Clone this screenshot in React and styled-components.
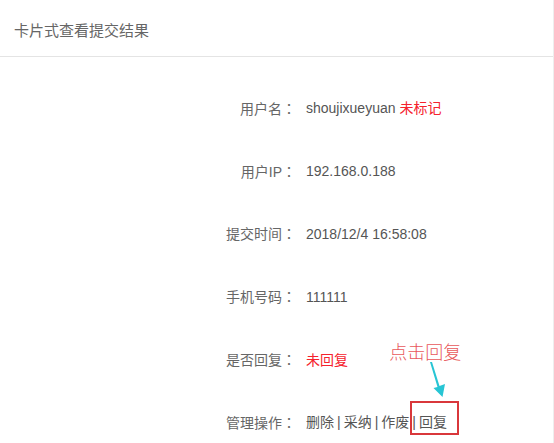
import React from "react"
import styled, { createGlobalStyle } from "styled-components"

const GlobalStyle = createGlobalStyle`
  html, body {
    margin: 0;
    padding: 0;
    background: #fff;
  }
  body {
    font-family: "Liberation Sans", "Noto Sans CJK SC", sans-serif;
  }
`

const Card = styled.section`
  width: 553px;
  height: 443px;
  border-right: 1px solid #eeeeee;
  background: #fff;
  overflow: hidden;
`

const CardHeader = styled.header`
  height: 57px;
  display: flex;
  align-items: center;
  padding: 3px 14px 0;
  border-bottom: 1px solid #e4e4e4;
  box-sizing: border-box;
  font-size: 15px;
  color: #666;
`

const Fields = styled.div`
  display: flex;
  flex-direction: column;
  padding-top: 20px;
`

const Row = styled.div`
  display: flex;
  align-items: center;
  height: 62.8px;
  font-size: 14px;
  line-height: 20px;
`

const Label = styled.span`
  width: 296px;
  text-align: right;
  color: #666;
`

/* traditional CJK fonts centre the full-width colon in its box */
const Colon = styled.span`
  font-family: "Noto Sans CJK TC", sans-serif;
`

const Value = styled.span`
  margin-left: 10px;
  color: ${props => (props.warn ? "#f5222d" : "#555")};
  white-space: pre;
`

const Flag = styled.span`
  color: #f5222d;
`

const Sep = styled.span`
  padding: 0 3px;
`

const Marked = styled.span`
  position: relative;
  display: inline-block;

  &::after {
    content: "";
    position: absolute;
    left: 1px;
    right: -12px;
    top: -11px;
    bottom: -3px;
    border: 2px solid #d9373b;
  }
`

const Callout = styled.div`
  position: absolute;
  left: -20px;
  top: -70px;
  display: flex;
  flex-direction: column;
  align-items: flex-start;
  pointer-events: none;
`

const Note = styled.span`
  font-family: "Noto Sans CJK SC", serif;
  font-weight: 300;
  font-size: 18px;
  line-height: 18px;
  color: #e8585b;
  white-space: nowrap;
`

const Pointer = styled.svg`
  display: block;
  margin: 1px 0 0 34px;
`

const rows = [
  { label: "用户名", value: "shoujixueyuan ", flag: "未标记" },
  { label: "用户IP", value: "192.168.0.188" },
  { label: "提交时间", value: "2018/12/4 16:58:08" },
  { label: "手机号码", value: "111111" },
  { label: "是否回复", value: "未回复", warn: true },
]

function Actions() {
  return (
    <Value>
      删除<Sep>|</Sep>采纳<Sep>|</Sep>作废
      <Marked>
        <Sep>|</Sep>回复
        <Callout>
          <Note>点击回复</Note>
          <Pointer width="28" height="40" viewBox="0 0 28 40">
            <path
              d="M7 1 L9 1 L16.5 25 L22 23 L19.5 36 L10.5 27 L14.5 26 Z"
              fill="#27c5d4"
            />
          </Pointer>
        </Callout>
      </Marked>
    </Value>
  )
}

export default function App() {
  return (
    <>
      <GlobalStyle />
      <Card>
        <CardHeader>卡片式查看提交结果</CardHeader>
        <Fields>
          {rows.map(r => (
            <Row key={r.label}>
              <Label>
                {r.label}
                <Colon>：</Colon>
              </Label>
              <Value warn={r.warn}>
                {r.value}
                {r.flag && <Flag>{r.flag}</Flag>}
              </Value>
            </Row>
          ))}
          <Row>
            <Label>
              管理操作<Colon>：</Colon>
            </Label>
            <Actions />
          </Row>
        </Fields>
      </Card>
    </>
  )
}
